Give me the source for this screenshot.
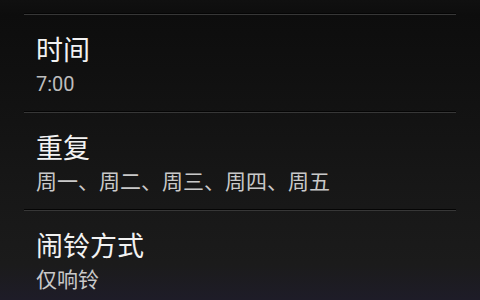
import React from "react";

const rows = [
  { title: "时间", sub: "7:00", subCls: "text-[20px] text-[#bdbdbd]" },
  { title: "重复", sub: "周一、周二、周三、周四、周五", subCls: "text-[21px] text-[#c9c9c9]" },
  { title: "闹铃方式", sub: "仅响铃", subCls: "text-[21px] text-[#c9c9c9]" },
];

export default function App() {
  return (
    <div
      className="w-[480px] h-[300px] overflow-hidden bg-[linear-gradient(to_bottom,#101010_0%,#0d0d0d_5%,#121212_35%,#171717_62%,#1b1b1b_88%,#1e1c28_100%)]"
      style={{ fontFamily: 'Roboto, "Noto Sans CJK SC", sans-serif' }}
    >
      <div className="h-[13px]" />
      {rows.map((r) => (
        <div key={r.title} className="px-[24px]">
          <div className="h-px bg-[#050505]" />
          <div className="h-px bg-[#373737]" />
          <div className="h-[96px] pt-[20px] px-[12px]">
            <div className="text-[27px] leading-[32px] text-[#f2f2f2]">{r.title}</div>
            <div className={`mt-[3px] leading-[28px] ${r.subCls}`}>{r.sub}</div>
          </div>
        </div>
      ))}
    </div>
  );
}
